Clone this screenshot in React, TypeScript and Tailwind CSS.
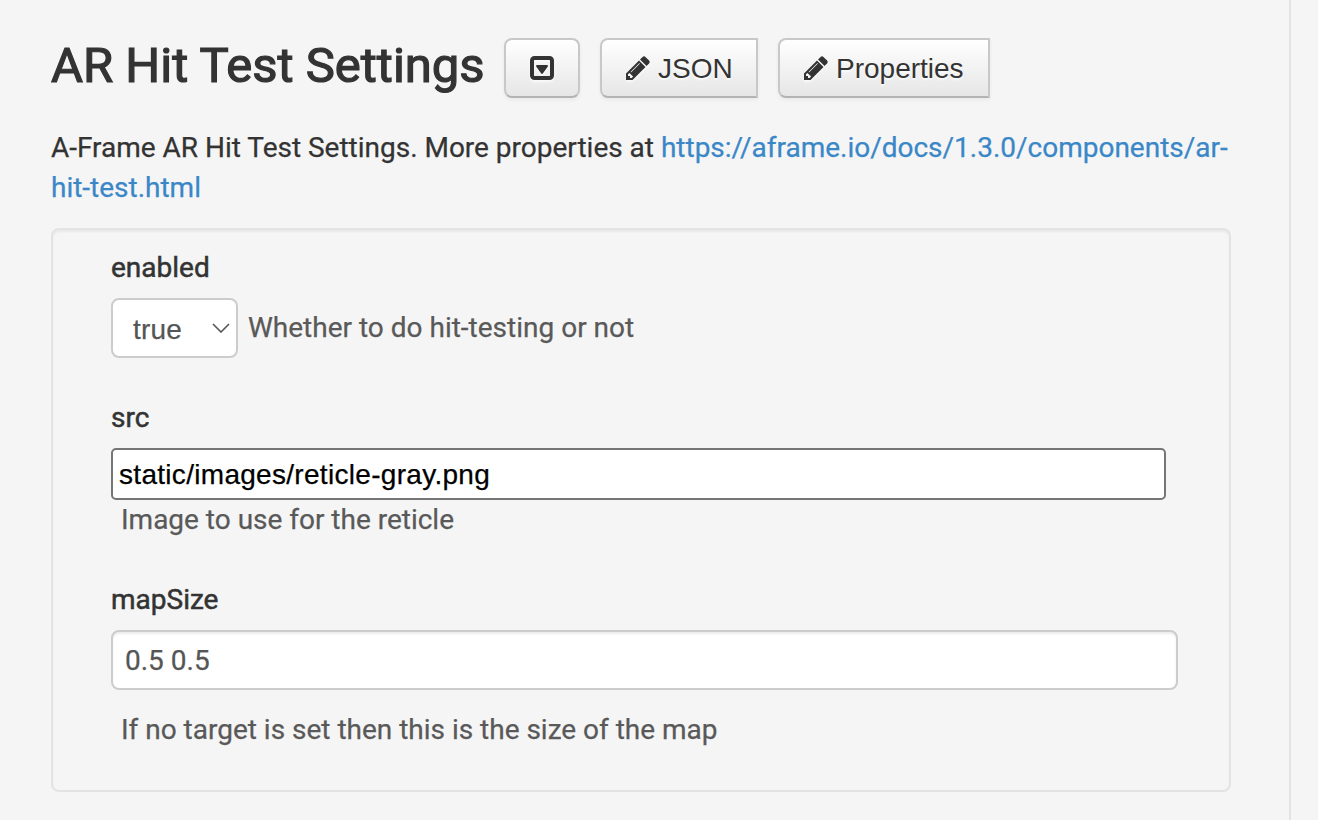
import React from "react";

const sans = "font-['Liberation_Sans',Arial,sans-serif]";

function PencilIcon() {
  return (
    <svg viewBox="0 0 1792 1792" className="h-7 w-7 shrink-0 drop-shadow-[0_2px_1px_rgba(255,255,255,0.75)]" fill="currentColor" aria-hidden="true">
      <path d="M491 1536l91-91-235-235-91 91v107h128v128h107zM1014 608q0-22-22-22-10 0-17 7l-542 542q-7 7-7 17 0 22 22 22 10 0 17-7l542-542q7-7 7-17zM960 416l416 416-832 832h-416v-416zM1643 512q0 53-37 90l-166 166-416-416 166-165q36-38 90-38 53 0 91 38l235 234q37 39 37 91z" />
    </svg>
  );
}

function CaretSquareIcon() {
  return (
    <svg viewBox="0 0 1792 1792" className="h-7 w-7 shrink-0 drop-shadow-[0_2px_1px_rgba(255,255,255,0.75)]" fill="currentColor" aria-hidden="true">
      <path d="M1273 739q17 35-5 64l-320 448q-19 27-52 27t-52-27l-320-448q-22-29-5-64 18-35 57-35h640q39 0 57 35zM1408 1376v-960q0-13-9.5-22.5t-22.5-9.5h-960q-13 0-22.5 9.5t-9.5 22.5v960q0 13 9.5 22.5t22.5 9.5h960q13 0 22.5-9.5t9.5-22.5zM1664 416v960q0 119-84.5 203.5t-203.5 84.5h-960q-119 0-203.5-84.5t-84.5-203.5v-960q0-119 84.5-203.5t203.5-84.5h960q119 0 203.5 84.5t84.5 203.5z" />
    </svg>
  );
}

function Button({ className, children }: { className: string; children: React.ReactNode }) {
  return (
    <button
      type="button"
      className={`flex h-[60px] shrink-0 items-center border-2 border-[#c8c8c8] border-b-[#b3b3b3] bg-linear-to-b from-white to-[#e6e6e6] pl-[22px] text-[28px] leading-10 text-[#333] shadow-[inset_0_2px_0_rgba(255,255,255,0.2),0_2px_4px_rgba(0,0,0,0.05)] [-webkit-text-stroke:0px] [text-shadow:0_2px_2px_rgba(255,255,255,0.75)] ${sans} ${className}`}
    >
      {children}
    </button>
  );
}

function Label({ className = "", children }: { className?: string; children: React.ReactNode }) {
  return <label className={`block [-webkit-text-stroke:0.5px_currentColor] ${className}`}>{children}</label>;
}

export default function App() {
  return (
    <div className="flex h-[820px] w-[1318px] overflow-hidden bg-[#f5f5f5] font-[Roboto,sans-serif] text-[28px] leading-10 text-[#333] [-webkit-text-stroke:0.25px_currentColor]">
      <main className="h-full w-[1291px] border-r-2 border-[#e3e3e3] pl-[51px] pt-[38px]">
        <header className="flex h-[60px] items-center">
          <h3 className="w-[453px] pb-[5px] text-[49px] leading-[60px] font-normal whitespace-nowrap [-webkit-text-stroke:1.2px_currentColor]">AR Hit Test Settings</h3>
          <Button className="mr-5 w-[76px] rounded-lg">
            <CaretSquareIcon />
          </Button>
          <Button className="mr-5 w-[158px] rounded-l-lg">
            <PencilIcon />
            <span className="ml-1.5 pt-0.5">JSON</span>
          </Button>
          <Button className="w-[212px] rounded-l-lg">
            <PencilIcon />
            <span className="ml-1.5 pt-0.5">Properties</span>
          </Button>
        </header>
        <p className="mt-[30px] tracking-[-0.01px] whitespace-nowrap">
          A-Frame AR Hit Test Settings. More properties at{" "}
          <a className="text-[#3a87c8]" href="#docs">
            https://aframe.io/docs/1.3.0/components/ar-
            <br />
            hit-test.html
          </a>
        </p>
        <section className="mt-5 h-[564px] w-[1180px] rounded-lg border-2 border-[#e3e3e3] px-[58px] pt-[18px] shadow-[inset_0_2px_2px_rgba(0,0,0,0.05)]">
          <Label>enabled</Label>
          <div className="mt-2.5 flex h-[60px] items-center">
            <div className={`flex h-[60px] w-[127px] items-center justify-between rounded-lg border-2 border-[#ccc] bg-white pr-1.5 pl-5 text-[#555] ${sans}`}>
              <span className="pt-1 tracking-[0.2px]">true</span>
              <svg viewBox="0 0 18 10" className="h-2.5 w-[18px]" fill="none" stroke="currentColor" strokeWidth="1.6">
                <path d="M1 1l8 8 8-8" />
              </svg>
            </div>
            <span className="pl-2.5 text-[#595959]">Whether to do hit-testing or not</span>
          </div>
          <Label className="mt-10">src</Label>
          <input
            className={`mt-2.5 block h-[52px] w-[1055px] rounded-[5px] border-2 border-[#767676] bg-white px-1.5 pt-0.5 tracking-[0.3px] text-black ${sans}`}
            defaultValue="static/images/reticle-gray.png"
          />
          <div className="pl-2.5 tracking-[-0.01px] text-[#595959]">Image to use for the reticle</div>
          <Label className="mt-10">mapSize</Label>
          <input
            className="mt-2.5 block h-[60px] w-[1067px] rounded-lg border-2 border-[#ccc] bg-white px-3 text-[#555] shadow-[inset_0_2px_2px_rgba(0,0,0,0.075)]"
            defaultValue="0.5 0.5"
          />
          <div className="mt-5 pl-2.5 tracking-[-0.01px] text-[#595959]">If no target is set then this is the size of the map</div>
        </section>
      </main>
    </div>
  );
}
